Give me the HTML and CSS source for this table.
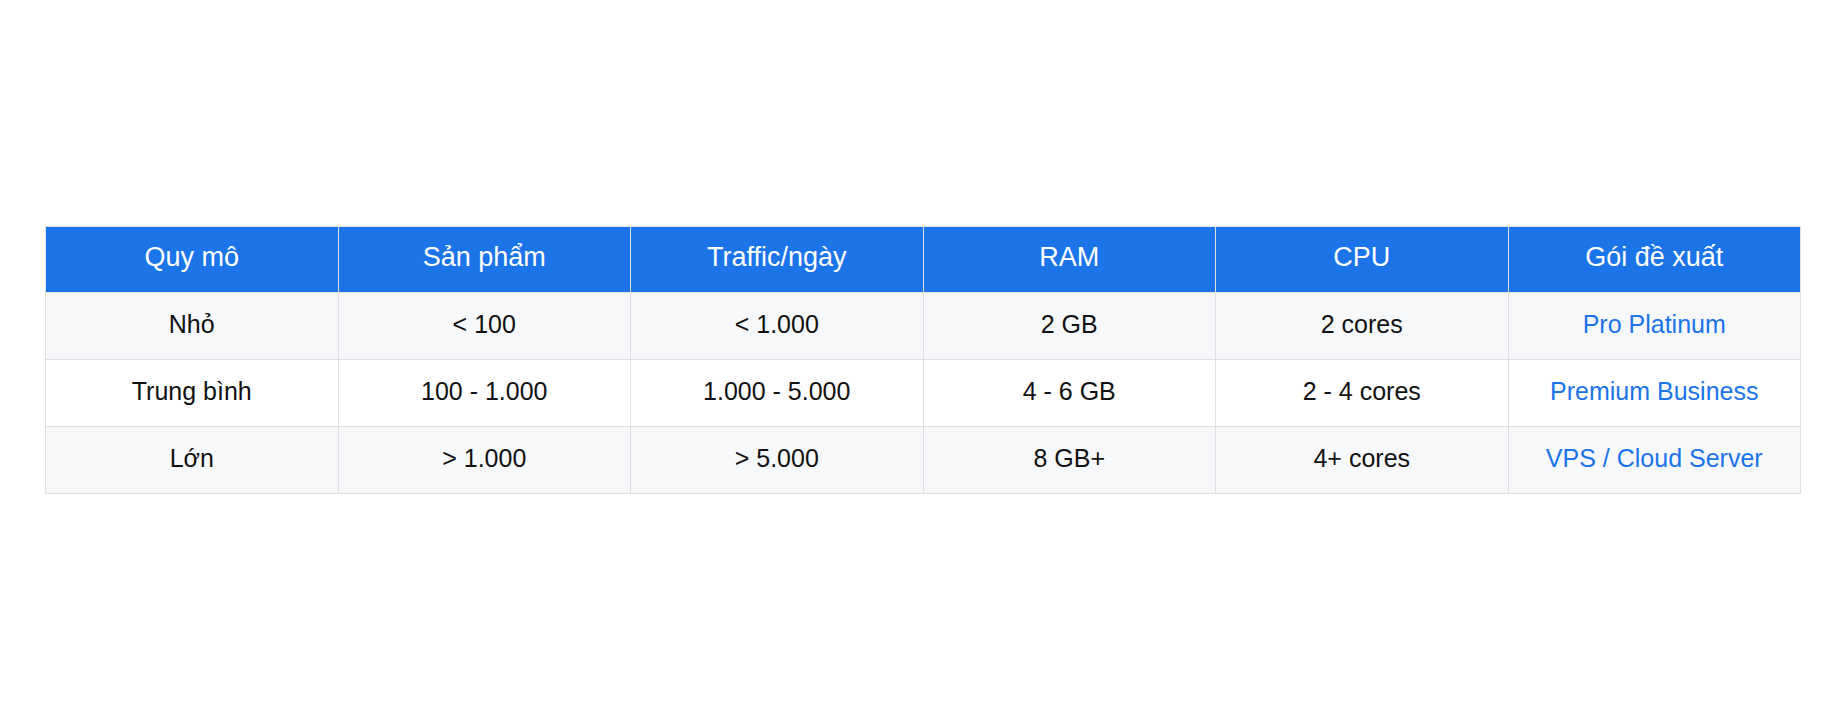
FILE: index.html
```html
<!DOCTYPE html>
<html lang="vi">
<head>
<meta charset="utf-8">
<title>Bảng đề xuất</title>
<link rel="stylesheet" href="styles.css">
</head>
<body>
<main class="page">
  <table class="plans">
    <thead>
      <tr>
        <th>Quy mô</th>
        <th>Sản phẩm</th>
        <th>Traffic/ngày</th>
        <th>RAM</th>
        <th>CPU</th>
        <th>Gói đề xuất</th>
      </tr>
    </thead>
    <tbody>
      <tr>
        <td>Nhỏ</td>
        <td>&lt; 100</td>
        <td>&lt; 1.000</td>
        <td>2 GB</td>
        <td>2 cores</td>
        <td class="plan">Pro Platinum</td>
      </tr>
      <tr>
        <td>Trung bình</td>
        <td>100 - 1.000</td>
        <td>1.000 - 5.000</td>
        <td>4 - 6 GB</td>
        <td>2 - 4 cores</td>
        <td class="plan">Premium Business</td>
      </tr>
      <tr>
        <td>Lớn</td>
        <td>&gt; 1.000</td>
        <td>&gt; 5.000</td>
        <td>8 GB+</td>
        <td>4+ cores</td>
        <td class="plan">VPS / Cloud Server</td>
      </tr>
    </tbody>
  </table>
</main>
</body>
</html>
```

FILE: styles.css
```css
html, body {
  margin: 0;
  padding: 0;
  background: #ffffff;
}

body {
  font-family: "Liberation Sans", Arial, sans-serif;
  color: #111111;
}

.page {
  height: 720px;
  box-sizing: border-box;
  padding: 0 44px 0 45px;
  display: flex;
  align-items: center;
}

.plans {
  width: 100%;
  border-collapse: collapse;
  table-layout: fixed;
}

.plans th,
.plans td {
  border: 1px solid #dedfe2;
  text-align: center;
  vertical-align: top;
  line-height: 30px;
}

.plans th {
  background: #1c74e9;
  color: #ffffff;
  font-weight: normal;
  font-size: 27px;
  padding: 15px 10px 20px;
}

.plans td {
  font-size: 25px;
  padding: 16px 10px 20px;
}

.plans tbody tr:nth-child(odd) td {
  background: #f7f8fa;
}

.plans tbody tr:nth-child(even) td {
  background: #ffffff;
}

.plans td.plan {
  color: #1c74e9;
}
```
